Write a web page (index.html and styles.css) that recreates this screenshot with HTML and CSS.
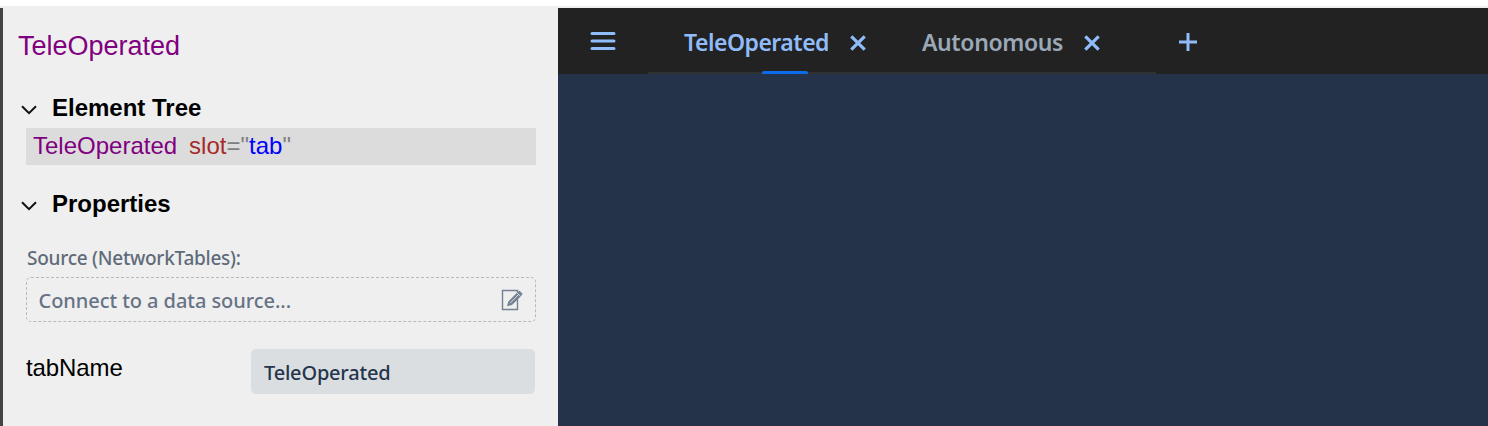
FILE: index.html
```html
<!DOCTYPE html>
<html lang="en">
<head>
<meta charset="utf-8">
<title>Dashboard editor</title>
<link rel="stylesheet" href="styles.css">
</head>
<body>
<div class="app">
  <aside class="panel">
    <h1 class="panel-title">TeleOperated</h1>
    <section class="group">
      <h2 class="group-title"><svg class="chevron" viewBox="0 0 16 10"><path d="M1 1.2 8 8.2 15 1.2"/></svg><span class="tree-label">Element Tree</span></h2>
      <div class="node"><span class="tag">TeleOperated</span><span class="attr">slot</span>="<span class="value">tab</span>"</div>
    </section>
    <section class="group properties">
      <h2 class="group-title"><svg class="chevron" viewBox="0 0 16 10"><path d="M1 1.2 8 8.2 15 1.2"/></svg><span class="props-label">Properties</span></h2>
      <div class="source-label"><span>Source (NetworkTables):</span></div>
      <div class="source-field">
        <span class="placeholder">Connect to a data source...</span>
        <svg class="edit" viewBox="0 0 22 22"><path class="paper" d="M16.5 5V1.5H1.5V20.5H16.5V10"/><path class="pencil" d="M6 17.3 7.3 12.4 16.5 3.2 18.5 1.8 21.6 4.8 20.2 7 11 16Z"/><path class="shine" d="M9 14.2 17 6M15.8 3.8 19.4 7.2"/></svg>
      </div>
      <div class="prop-row">
        <label class="prop-name">tabName</label>
        <div class="prop-input"><span>TeleOperated</span></div>
      </div>
    </section>
  </aside>
  <main class="workspace">
    <nav class="tabbar">
      <svg class="menu" viewBox="0 0 26 20"><path d="M2 2.5H24M2 10H24M2 17.5H24"/></svg>
      <div class="tabs">
        <div class="tab active"><span class="tab-name">TeleOperated</span><svg class="close" viewBox="0 0 16 16"><path d="M1.3 1.3 14.7 14.7M14.7 1.3 1.3 14.7"/></svg></div>
        <div class="tab"><span class="tab-name">Autonomous</span><svg class="close" viewBox="0 0 16 16"><path d="M1.3 1.3 14.7 14.7M14.7 1.3 1.3 14.7"/></svg></div>
      </div>
      <svg class="add" viewBox="0 0 18 18"><path d="M9 0V18M0 9H18"/></svg>
    </nav>
  </main>
</div>
</body>
</html>
```
FILE: styles.css
```css
* { box-sizing: border-box; }
body { margin: 0; background: #fff; font-family: "Liberation Sans", Arial, sans-serif; color: #000; }
svg { display: block; flex: none; fill: none; }
span { white-space: nowrap; }
.app { display: flex; height: 426px; padding-top: 6px; overflow: hidden; background: linear-gradient(#fff 6px, #efefef 6px); }
.panel { width: 558px; margin-top: 2px; border-left: 3px solid #444; background: #efefef; flex: none; }
.panel-title { margin: 19px 0 0 15px; height: 38px; line-height: 38px; font-size: 27px; font-weight: 400; color: purple; }
.group { padding: 24px 22px 0 23px; }
.group-title { display: flex; align-items: center; margin: 0 0 0 -5px; height: 37px; font-size: 24px; font-weight: 700; }
.chevron { width: 16px; height: 10px; margin: 4px 15px 0 0; }
.chevron path { stroke: #111; stroke-width: 2; }
.node { height: 37px; margin-top: 2px; padding-left: 7px; line-height: 35px; font-size: 24px; background: #dcdcdc; color: gray; white-space: nowrap; }
.tag { color: purple; margin-right: 12px; }
.attr { color: brown; }
.value { color: blue; }
.properties { padding-top: 20px; }
.source-label, .source-field, .prop-input, .tab { font-family: "Noto Sans", sans-serif; font-weight: 500; }
.source-label { height: 30px; margin-top: 21px; padding-left: 1px; line-height: 30px; font-size: 19px; letter-spacing: -.25px; color: #5f6b7a; }
.source-field { display: flex; align-items: center; justify-content: space-between; height: 45px; margin-top: 4px; padding: 0 12px 0 11.5px; border: 1px dashed #b5b9c0; border-radius: 5px; font-size: 20px; letter-spacing: -.06px; color: #667385; }
.placeholder { padding-top: 2px; }
.edit { width: 22px; height: 22px; }
.paper { stroke: #748193; stroke-width: 1.4; }
.pencil { fill: #748193; }
.shine { stroke: #efefef; stroke-width: .8; }
.prop-row { display: flex; justify-content: space-between; margin: 27px 1px 0 0; }
.prop-name { font-size: 24px; line-height: 38px; letter-spacing: -.1px; }
.prop-input { width: 284px; height: 45px; padding-left: 13px; line-height: 47px; border-radius: 5px; background: #dadee1; color: #25354c; font-size: 20px; letter-spacing: -.2px; }
.workspace { flex: 1; margin-top: 2px; background: #243349; }
.tabbar { display: flex; align-items: center; height: 66px; background: #222; }
.menu { width: 26px; height: 20px; margin: 0 32px 0 32px; }
.menu path { stroke: #90bcf9; stroke-width: 3; stroke-linecap: round; }
.tabs { display: flex; width: 508px; height: 66px; padding-left: 36px; border-bottom: 2px solid #303133; }
.tab { position: relative; display: flex; flex: none; align-items: center; width: 238px; height: 66px; padding-top: 4px; font-size: 23px; font-weight: 600; letter-spacing: -.5px; color: #9ba8b7; }
.tab-name { width: 166px; margin-top: -3px; }
.tab:last-child .tab-name { width: 162px; letter-spacing: -.38px; }
.tab:last-child { width: 234px; }
.active { color: #90bcf9; }
.active::after { content: ""; position: absolute; left: 78px; bottom: 0; width: 46px; height: 3px; border-radius: 2px 2px 0 0; background: #0d6bea; }
.close { width: 16px; height: 16px; }
.close path { stroke: #90bcf9; stroke-width: 3.2; }
.add { width: 18px; height: 18px; margin: 2px 0 0 23px; }
.add path { stroke: #90bcf9; stroke-width: 3; }
```
